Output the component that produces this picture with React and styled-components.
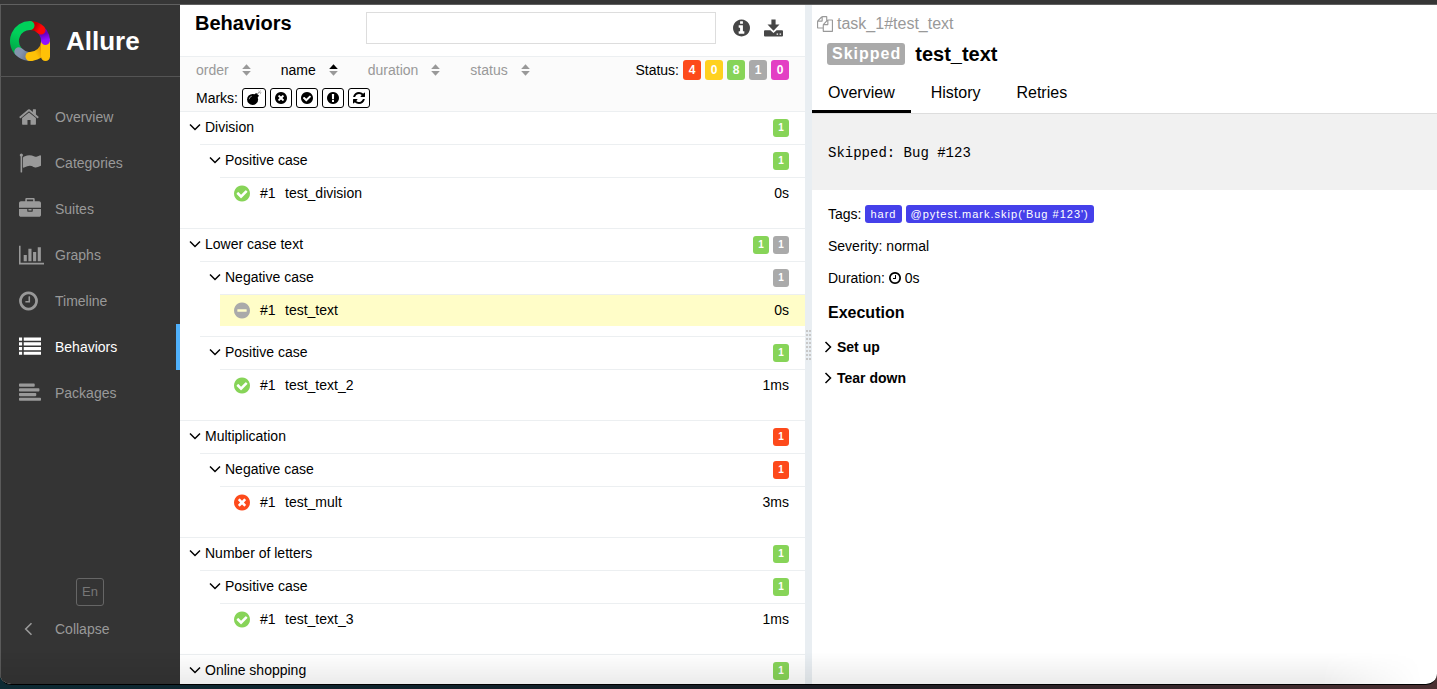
import React from "react";
import styled, { createGlobalStyle } from "styled-components";

const GlobalStyle = createGlobalStyle`
  *, *::before, *::after { box-sizing: border-box; }
  html, body, #root { height: 100%; }
  body {
    margin: 0;
    background: #000;
    color: #000;
    font-family: "Liberation Sans", Arial, sans-serif;
    font-size: 14px;
    line-height: 20px;
    overflow: hidden;
  }
  button { font: inherit; color: inherit; background: none; border: 0; padding: 0; cursor: pointer; text-align: left; }
  a { color: inherit; text-decoration: none; }
  h1, h2, h3, p, pre, ul { margin: 0; padding: 0; }
  ul { list-style: none; }
`;

const colors = {
  failed: "#fd4a1b",
  broken: "#ffd11f",
  passed: "#87d458",
  skipped: "#aaaaaa",
  unknown: "#e33fc4",
};

/* ---------- icons ---------- */

const DISC =
  "M1664 896q0 209-103 385.5t-279.5 279.5-385.5 103-385.5-103-279.5-279.5-103-385.5 103-385.5 279.5-279.5 385.5-103 385.5 103 279.5 279.5 103 385.5z";

const glyphs = {
  home: {
    x: 64, w: 1664,
    d: "M1472 992v480q0 26-19 45t-45 19h-384v-384h-256v384h-384q-26 0-45-19t-19-45v-480q0-1 .5-3t.5-3l575-474 575 474q1 2 1 6zm223-69l-62 74q-8 9-21 11h-3q-13 0-21-7l-692-577-692 577q-12 8-24 7-13-2-21-11l-62-74q-8-10-7-23.5t11-21.5l719-599q32-26 76-26t76 26l244 204v-195q0-14 9-23t23-9h192q14 0 23 9t9 23v408l219 182q10 8 11 21.5t-7 23.5z",
  },
  flag: {
    x: 0, w: 1792,
    d: "M320 256q0 72-64 110v1266q0 13-9.5 22.5t-22.5 9.5h-64q-13 0-22.5-9.5t-9.5-22.5v-1266q-64-38-64-110 0-53 37.5-90.5t90.5-37.5 90.5 37.5 37.5 90.5zm1472 64v763q0 25-12.5 38.5t-39.5 27.5q-215 116-369 116-61 0-123.5-22t-108.5-48-115.5-48-142.5-22q-192 0-464 146-17 9-33 9-26 0-45-19t-19-45v-742q0-32 31-55 21-14 79-43 236-120 421-120 107 0 200 29t219 88q38 19 88 19 54 0 117.5-21t110-47 88-47 54.5-21q26 0 45 19t19 45z",
  },
  briefcase: {
    x: 0, w: 1792,
    d: "M640 256h512v-128h-512v128zm1152 640v480q0 66-47 113t-113 47h-1472q-66 0-113-47t-47-113v-480h672v160q0 26 19 45t45 19h320q26 0 45-19t19-45v-160h672zm-768 0v128h-256v-128h256zm768-480v384h-1792v-384q0-66 47-113t113-47h352v-160q0-40 28-68t68-28h576q40 0 68 28t28 68v160h352q66 0 113 47t47 113z",
  },
  chart: {
    x: 0, w: 2048,
    d: "M640 896v512h-256v-512h256zm384-512v1024h-256v-1024h256zm1024 1152v128h-2048v-1536h128v1408h1920zm-640-896v768h-256v-768h256zm384-384v1152h-256v-1152h256z",
  },
  clock: {
    x: 128, w: 1536,
    d: "M1024 544v448q0 14-9 23t-23 9h-320q-14 0-23-9t-9-23v-64q0-14 9-23t23-9h224v-352q0-14 9-23t23-9h64q14 0 23 9t9 23zm416 352q0-148-73-273t-198-198-273-73-273 73-198 198-73 273 73 273 198 198 273 73 273-73 198-198 73-273zm224 0q0 209-103 385.5t-279.5 279.5-385.5 103-385.5-103-279.5-279.5-103-385.5 103-385.5 279.5-279.5 385.5-103 385.5 103 279.5 279.5 103 385.5z",
  },
  list: {
    x: 0, w: 1792,
    d: "M0 128h256v256H0zM384 128h1408v256H384zM0 512h256v256H0zM384 512h1408v256H384zM0 896h256v256H0zM384 896h1408v256H384zM0 1280h256v256H0zM384 1280h1408v256H384z",
  },
  align: {
    x: 0, w: 1792,
    d: "M64 128h1152q64 0 64 64v128q0 64-64 64H64q-64 0-64-64V192q0-64 64-64zM64 512h1536q64 0 64 64v128q0 64-64 64H64q-64 0-64-64V576q0-64 64-64zM64 896h1280q64 0 64 64v128q0 64-64 64H64q-64 0-64-64V960q0-64 64-64zM64 1280h1664q64 0 64 64v128q0 64-64 64H64q-64 0-64-64v-128q0-64 64-64z",
  },
  check: {
    x: 128, w: 1536,
    d: "M1412 734q0-28-18-46l-91-90q-19-19-45-19t-45 19l-408 407-226-226q-19-19-45-19t-45 19l-91 90q-18 18-18 46 0 27 18 45l362 362q19 19 45 19 27 0 46-19l543-543q18-18 18-45z" + DISC,
  },
  times: {
    x: 128, w: 1536,
    d: "M1277 1122q0-26-19-45l-181-181 181-181q19-19 19-45 0-27-19-46l-90-90q-19-18-46-18-26 0-45 19l-181 181-181-181q-19-19-45-19-27 0-46 18l-90 90q-18 19-18 46 0 26 19 45l181 181-181 181q-19 19-19 45 0 27 19 46l90 90q19 18 46 18 26 0 45-19l181-181 181 181q19 19 45 19 27 0 46-18l90-90q18-19 18-46z" + DISC,
  },
  minus: {
    x: 128, w: 1536,
    d: "M1344 960v-128q0-26-19-45t-45-19h-768q-26 0-45 19t-19 45v128q0 26 19 45t45 19h768q26 0 45-19t19-45z" + DISC,
  },
  info: {
    x: 128, w: 1536,
    d: "M1152 1376v-160q0-14-9-23t-23-9h-96v-512q0-14-9-23t-23-9h-320q-14 0-23 9t-9 23v160q0 14 9 23t23 9h96v320h-96q-14 0-23 9t-9 23v160q0 14 9 23t23 9h448q14 0 23-9t9-23zm-128-896v-160q0-14-9-23t-23-9h-192q-14 0-23 9t-9 23v160q0 14 9 23t23 9h192q14 0 23-9t9-23z" + DISC,
  },
  exclamation: {
    x: 128, w: 1536,
    d: "M1024 1375v-190q0-14-9-23.5t-22-9.5h-192q-13 0-23 10t-10 23v190q0 13 10 23t23 10h192q13 0 22-9.5t9-23.5zm-2-344l18-621q0-12-10-18-10-8-24-8h-220q-14 0-24 8-10 6-10 18l17 621q0 10 10 17.5t24 7.5h185q14 0 23.5-7.5t10.5-17.5z" + DISC,
  },
  refresh: {
    x: 128, w: 1536,
    d: "M1639 1056q0 5-1 7-64 268-268 434.5t-478 166.5q-146 0-282.5-55t-243.5-157l-129 129q-19 19-45 19t-45-19-19-45v-448q0-26 19-45t45-19h448q26 0 45 19t19 45-19 45l-137 137q71 66 161 102t187 36q134 0 250-65t186-179q11-17 53-117 8-23 30-23h192q13 0 22.5 9.5t9.5 22.5zm25-800v448q0 26-19 45t-45 19h-448q-26 0-45-19t-19-45 19-45l138-138q-148-137-349-137-134 0-250 65t-186 179q-11 17-53 117-8 23-30 23h-199q-13 0-22.5-9.5t-9.5-22.5v-7q65-268 270-434.5t480-166.5q146 0 284 55.5t245 156.5l130-129q19-19 45-19t45 19 19 45z",
  },
  copy: {
    x: 0, w: 1792,
    d: "M1696 384q40 0 68 28t28 68v1216q0 40-28 68t-68 28h-960q-40 0-68-28t-28-68v-288h-544q-40 0-68-28t-28-68v-672q0-40 20-88t48-76l408-408q28-28 76-48t88-20h416q40 0 68 28t28 68v328q68-40 128-40h416zm-544 213l-299 299h299v-299zm-640-384l-299 299h299v-299zm196 647l316-316v-416h-384v416q0 40-28 68t-68 28h-416v640h512v-256q0-40 20-88t48-76zm956 804v-1152h-384v416q0 40-28 68t-68 28h-416v640h896z",
  },
};

const IconSvg = styled.svg`
  display: block;
  flex: none;
  fill: ${(p) => p.$color || "currentColor"};
`;

function Icon({ name, size, color }) {
  const g = glyphs[name];
  return (
    <IconSvg
      $color={color}
      viewBox={`${g.x} 0 ${g.w} 1792`}
      height={size}
      width={Math.round((size * g.w) / 1792)}
      fillRule="evenodd"
      aria-hidden="true"
    >
      <path d={g.d} />
    </IconSvg>
  );
}

const LineSvg = styled.svg`
  display: block;
  flex: none;
  fill: none;
  stroke: currentColor;
`;

const ChevronDown = () => (
  <LineSvg width="12" height="12" viewBox="0 0 12 12" strokeWidth="1.5" aria-hidden="true">
    <path d="M1 3.5l5 5 5-5" />
  </LineSvg>
);
const ChevronRight = () => (
  <LineSvg width="8" height="12" viewBox="0 0 8 12" strokeWidth="1.5" aria-hidden="true">
    <path d="M1.5 1l5 5-5 5" />
  </LineSvg>
);
const ChevronLeft = () => (
  <LineSvg width="9" height="14" viewBox="0 0 9 14" strokeWidth="1.6" aria-hidden="true">
    <path d="M7.500 1.200L1.700 7l5.800 5.800" />
  </LineSvg>
);

const BombIcon = () => (
  <IconSvg width="16" height="16" viewBox="0 0 16 16" aria-hidden="true">
    <circle cx="6.600" cy="9.400" r="5.500" />
    <path d="M8.200 4.600l2-1.600 2.800 2.800-1.600 2z" />
    <path d="M11.200 4.600q.6-2.200 2.600-2.400" fill="none" stroke="#555" strokeWidth="0.7" />
    <path d="M12.400.8l1.200.8M14.400.4v1M15.400 2.400h-1.200M15 4l-1-.8" fill="none" stroke="#888" strokeWidth="0.6" />
    <path d="M3.200 9.200q.2-2.400 2.600-3" fill="none" stroke="#fff" strokeWidth="0.6" />
  </IconSvg>
);

const DownloadIcon = () => (
  <IconSvg width="19" height="18" viewBox="0 0 19 18" aria-hidden="true">
    <path d="M7.400 0.500h4.200v5h3.900L9.500 11.800 3.500 5.500h3.900z" />
    <path
      fillRule="evenodd"
      d="M1 11.300h5.400l3.100 2.600 3.100-2.600H18q1 0 1 1v4.200q0 1-1 1H1q-1 0-1-1v-4.200q0-1 1-1zM12.600 14.400v1.300h1.500v-1.300zM15.600 14.400v1.300h1.500v-1.300z"
    />
  </IconSvg>
);

const SortIcon = ({ asc }) => (
  <IconSvg width="9" height="12" viewBox="0 0 9 12" aria-hidden="true">
    <path d="M4.500.3L8.800 5H.2z" fill={asc ? "#000" : "#999"} />
    <path d="M4.500 11.700L8.800 7H.2z" fill="#999" />
  </IconSvg>
);

const Logo = () => (
  <svg width="40" height="40" viewBox="0 0 40 40" fill="none" strokeWidth="9" strokeLinecap="round" aria-hidden="true">
    <defs>
      <linearGradient id="green" x1="20" y1="4" x2="8" y2="32" gradientUnits="userSpaceOnUse">
        <stop offset="0.4" stopColor="#00d15a" />
        <stop offset="1" stopColor="#00a847" />
      </linearGradient>
      <linearGradient id="red" x1="22" y1="5" x2="34" y2="12" gradientUnits="userSpaceOnUse">
        <stop offset="0.2" stopColor="#c00000" />
        <stop offset="0.6" stopColor="#ff0707" />
      </linearGradient>
      <linearGradient id="violet" x1="33" y1="11" x2="36" y2="21" gradientUnits="userSpaceOnUse">
        <stop offset="0.2" stopColor="#6a00c0" />
        <stop offset="0.8" stopColor="#9010ff" />
      </linearGradient>
      <linearGradient id="slate" x1="8" y1="30" x2="18" y2="36" gradientUnits="userSpaceOnUse">
        <stop offset="0.3" stopColor="#8594ad" />
        <stop offset="1" stopColor="#6b7890" />
      </linearGradient>
      <linearGradient id="amber" x1="20" y1="36" x2="34" y2="28" gradientUnits="userSpaceOnUse">
        <stop offset="0.4" stopColor="#ffc107" />
        <stop offset="1" stopColor="#d98c00" />
      </linearGradient>
    </defs>
    <path d="M20 35.500A15.500 15.500 0 0 0 35.500 21" stroke="url(#amber)" />
    <path d="M35.500 20v15.500" stroke="#ffc107" />
    <path d="M32.800 11.300A15.500 15.500 0 0 1 35.500 19.500" stroke="url(#violet)" />
    <path d="M20.500 4.500A15.500 15.500 0 0 1 31 9" stroke="url(#red)" />
    <path d="M20 4.500A15.500 15.500 0 0 0 8.500 30.400" stroke="url(#green)" />
    <path d="M8.800 30.700A15.500 15.500 0 0 0 18 35.400" stroke="url(#slate)" />
    <path d="M20 35.500h1" stroke="#ffc107" />
  </svg>
);

/* ---------- window ---------- */

const Desktop = styled.div`
  height: 100%;
  padding-bottom: 4px;
  background: linear-gradient(90deg, #0d2a33 0, #10222b 30%, #1c1c22 60%, #4a2f31 100%);
`;

const Window = styled.div`
  position: relative;
  height: 100%;
  display: flex;
  flex-direction: column;
  overflow: hidden;
  border-bottom: 1px solid #000;
  border-radius: 0 0 11px 11px;
  background: #fff;
`;

const TitleEdge = styled.div`
  flex: none;
  height: 5px;
  background: #363636;
  border-bottom: 1px solid #606060;
`;

const Columns = styled.div`
  flex: 1;
  min-height: 0;
  display: flex;
`;

const BottomShade = styled.div`
  position: absolute;
  inset: auto 0 0 0;
  height: 32px;
  pointer-events: none;
  background: linear-gradient(to bottom, rgba(0, 0, 0, 0), rgba(0, 0, 0, 0.08));
  mask-image: linear-gradient(to right, #000 92%, transparent 99%);
`;

/* ---------- sidebar ---------- */

const Sidebar = styled.aside`
  flex: none;
  width: 180px;
  display: flex;
  flex-direction: column;
  background: #343434;
  box-shadow: inset 1px 0 #5a5a5a;
  color: #999;
`;

const Brand = styled.a`
  display: flex;
  align-items: center;
  gap: 16px;
  height: 72px;
  padding-left: 10px;
  border-bottom: 1px solid #545454;
  color: #fff;
  font-size: 26px;
  font-weight: bold;
`;

const Nav = styled.nav`
  flex: 1;
  padding-top: 17px;
`;

const NavItem = styled.a`
  display: flex;
  align-items: center;
  height: 46px;
  padding-left: 19px;
  border-right: 4px solid ${(p) => (p.$active ? "#4fb0fb" : "transparent")};
  color: ${(p) => (p.$active ? "#fff" : "inherit")};
`;

const NavIcon = styled.span`
  width: 36px;
`;

const SidebarFoot = styled.div`
  display: flex;
  flex-direction: column;
  padding-bottom: 32px;
`;

const LangButton = styled.button`
  align-self: center;
  width: 28px;
  height: 28px;
  border: 1px solid #666;
  border-radius: 3px;
  color: #777;
  font-size: 13px;
  text-align: center;
`;

const CollapseButton = styled.button`
  display: flex;
  align-items: center;
  height: 46px;
  padding-left: 24px;
`;

const CollapseIcon = styled.span`
  width: 31px;
`;

/* ---------- tree pane ---------- */

const TreePane = styled.section`
  flex: 1;
  min-width: 0;
  overflow: hidden;
`;

const TreeHeader = styled.header`
  display: flex;
  align-items: flex-start;
  height: 52px;
  padding: 7px 22px 0 15px;
  border-bottom: 1px solid #eceff1;
`;

const PaneTitle = styled.h1`
  flex: 1;
  font-size: 20px;
  line-height: 22px;
`;

const Search = styled.input`
  width: 350px;
  height: 32px;
  margin-right: 17px;
  padding: 0 8px;
  border: 1px solid #ddd;
  background: #fff;
  font: inherit;
`;

const HeaderTools = styled.div`
  display: flex;
  align-items: center;
  gap: 14px;
  height: 32px;
  color: #464646;
`;

const Filters = styled.div`
  height: 55px;
  padding: 3px 16px 0;
  background: #fbfbfb;
  border-bottom: 1px solid #eceff1;
`;

const FilterRow = styled.div`
  display: flex;
  align-items: center;
  gap: ${(p) => p.$gap}px;
  margin-bottom: 8px;
`;

const Sorter = styled.button`
  display: flex;
  align-items: center;
  gap: 13px;
  color: ${(p) => (p.$active ? "#000" : "#999")};
`;

const StatusFilter = styled.div`
  display: flex;
  align-items: center;
  gap: 4px;
  margin-left: auto;
`;

const StatusButton = styled.button`
  min-width: 18px;
  height: 20px;
  border-radius: 3px;
  background: ${(p) => colors[p.$status]};
  color: #fff;
  font-size: 12px;
  font-weight: bold;
  text-align: center;
`;

const MarkButton = styled.button`
  display: flex;
  align-items: center;
  justify-content: center;
  height: 20px;
  padding: 0 ${(p) => p.$pad}px;
  border: 1px solid #000;
  border-radius: 3px;
  background: #fff;
`;

const Group = styled.li`
  padding-bottom: 9px;
  & + & { border-top: 1px solid #eceff1; }
`;

const GroupHead = styled.button`
  display: flex;
  align-items: center;
  gap: 4px;
  width: 100%;
  height: 32px;
  padding: 0 16px 2px 9px;
`;

const GroupName = styled.span`
  flex: 1;
`;

const SubGroup = styled.li`
  margin-left: 20px;
  padding-bottom: 10px;
  border-top: 1px solid #eceff1;
`;

const Leaf = styled.a`
  display: flex;
  align-items: center;
  height: 31px;
  padding: 0 16px 1px 14px;
  background: ${(p) => (p.$selected ? "#fffdc8" : "transparent")};
`;

const LeafItem = styled.li`
  margin-left: 20px;
  border-top: 1px solid #eceff1;
`;

const LeafOrder = styled.span`
  width: 25px;
  margin-left: 10px;
`;

const LeafName = styled.span`
  flex: 1;
`;

const Count = styled.span`
  min-width: 16px;
  height: 18px;
  margin-top: 2px;
  border-radius: 3px;
  background: ${(p) => colors[p.$status]};
  color: #fff;
  font-size: 10px;
  font-weight: bold;
  line-height: 18px;
  text-align: center;
`;

/* ---------- divider ---------- */

const Divider = styled.div`
  flex: none;
  display: flex;
  align-items: center;
  justify-content: center;
  width: 7px;
  background: #e9eef2;
  cursor: col-resize;
`;

const Grip = () => (
  <svg width="5" height="30" viewBox="0 0 5 30" fill="#c8c8c8" aria-hidden="true">
    {[0, 4, 8, 12, 16, 20, 24, 28].map((y) => (
      <path key={y} d={`M0 ${y}h2v2H0zM3 ${y}h2v2H3z`} />
    ))}
  </svg>
);

/* ---------- detail pane ---------- */

const DetailPane = styled.section`
  flex: 1;
  min-width: 0;
  overflow: hidden;
`;

const FullName = styled.div`
  display: flex;
  align-items: center;
  gap: 4px;
  padding: 8px 5px 0;
  color: #999;
  font-size: 16px;
  line-height: 22px;
`;

const TestTitle = styled.h2`
  display: flex;
  align-items: center;
  gap: 10px;
  padding: 8px 15px 0;
  font-size: 20px;
  line-height: 22px;
`;

const StatusLabel = styled.span`
  height: 22px;
  padding: 0 4px 0 5px;
  border-radius: 3px;
  background: ${(p) => colors[p.$status]};
  color: #fff;
  font-size: 16px;
  line-height: 22px;
  letter-spacing: 1px;
`;

const Tabs = styled.nav`
  display: flex;
  gap: 4px;
  margin-top: 7px;
  border-bottom: 1px solid #ddd;
`;

const Tab = styled.a`
  height: 41px;
  padding: 0 16px;
  border-bottom: 3px solid ${(p) => (p.$active ? "#000" : "transparent")};
  font-size: 16px;
  line-height: 42px;
`;

const Message = styled.pre`
  padding: 29px 16px 27px;
  background: #f1f1f1;
  font-family: "Liberation Mono", "Courier New", monospace;
  font-size: 14px;
  line-height: 20px;
`;

const Facts = styled.div`
  display: flex;
  flex-direction: column;
  gap: 12px;
  padding: 14px 16px 0;
`;

const Fact = styled.p`
  display: flex;
  align-items: center;
  gap: 4px;
`;

const Tag = styled.span`
  height: 18px;
  padding: 0 5px;
  border-radius: 3px;
  background: #4540ea;
  color: #fff;
  font-size: 11px;
  line-height: 18px;
  letter-spacing: 1px;
`;

const SectionTitle = styled.h3`
  padding: 15px 16px 8px;
  font-size: 16px;
  line-height: 20px;
`;

const Step = styled.button`
  display: flex;
  align-items: center;
  gap: 5px;
  width: 100%;
  height: 31px;
  padding-left: 12px;
  font-weight: bold;
`;

/* ---------- data ---------- */

const navItems = [
  ["home", "Overview"],
  ["flag", "Categories"],
  ["briefcase", "Suites"],
  ["chart", "Graphs"],
  ["clock", "Timeline"],
  ["list", "Behaviors"],
  ["align", "Packages"],
];

const sorters = ["order", "name", "duration", "status"];

const statusCounts = [
  ["failed", 4],
  ["broken", 0],
  ["passed", 8],
  ["skipped", 1],
  ["unknown", 0],
];

const marks = [
  ["times", "Newly failed"],
  ["check", "Newly passed"],
  ["exclamation", "Newly broken"],
  ["refresh", "Retries"],
];

const leafIcons = { passed: "check", failed: "times", skipped: "minus" };

const tree = [
  { name: "Division", counts: ["passed"], cases: [
    { name: "Positive case", status: "passed", test: "test_division", time: "0s" },
  ] },
  { name: "Lower case text", counts: ["passed", "skipped"], cases: [
    { name: "Negative case", status: "skipped", test: "test_text", time: "0s", selected: true },
    { name: "Positive case", status: "passed", test: "test_text_2", time: "1ms" },
  ] },
  { name: "Multiplication", counts: ["failed"], cases: [
    { name: "Negative case", status: "failed", test: "test_mult", time: "3ms" },
  ] },
  { name: "Number of letters", counts: ["passed"], cases: [
    { name: "Positive case", status: "passed", test: "test_text_3", time: "1ms" },
  ] },
  { name: "Online shopping", counts: ["passed"], cases: [] },
];

export default function App() {
  return (
    <>
      <GlobalStyle />
      <Desktop>
        <Window>
          <TitleEdge />
          <Columns>
            <Sidebar>
              <Brand href="#">
                <Logo />
                <span>Allure</span>
              </Brand>
              <Nav>
                {navItems.map(([icon, label]) => (
                  <NavItem key={label} href="#" $active={label === "Behaviors"}>
                    <NavIcon><Icon name={icon} size={22} /></NavIcon>
                    <span>{label}</span>
                  </NavItem>
                ))}
              </Nav>
              <SidebarFoot>
                <LangButton type="button">En</LangButton>
                <CollapseButton type="button">
                  <CollapseIcon><ChevronLeft /></CollapseIcon>
                  <span>Collapse</span>
                </CollapseButton>
              </SidebarFoot>
            </Sidebar>

            <TreePane>
              <TreeHeader>
                <PaneTitle>Behaviors</PaneTitle>
                <Search type="text" aria-label="Search" />
                <HeaderTools>
                  <button type="button" aria-label="Show info"><Icon name="info" size={20} /></button>
                  <button type="button" aria-label="Download CSV"><DownloadIcon /></button>
                </HeaderTools>
              </TreeHeader>
              <Filters>
                <FilterRow $gap={30}>
                  {sorters.map((s) => (
                    <Sorter key={s} type="button" $active={s === "name"}>
                      <span>{s}</span>
                      <SortIcon asc={s === "name"} />
                    </Sorter>
                  ))}
                  <StatusFilter>
                    <span>Status:</span>
                    {statusCounts.map(([status, n]) => (
                      <StatusButton key={status} type="button" $status={status}>{n}</StatusButton>
                    ))}
                  </StatusFilter>
                </FilterRow>
                <FilterRow $gap={4}>
                  <span>Marks:</span>
                  <MarkButton type="button" aria-label="Flaky" $pad={3}><BombIcon /></MarkButton>
                  {marks.map(([icon, label]) => (
                    <MarkButton key={icon} type="button" aria-label={label} $pad={4}>
                      <Icon name={icon} size={14} />
                    </MarkButton>
                  ))}
                </FilterRow>
              </Filters>
              <ul>
                {tree.map((g) => (
                  <Group key={g.name}>
                    <GroupHead type="button">
                      <ChevronDown />
                      <GroupName>{g.name}</GroupName>
                      {g.counts.map((c) => <Count key={c} $status={c}>1</Count>)}
                    </GroupHead>
                    <ul>
                      {g.cases.map((c) => (
                        <SubGroup key={c.name}>
                          <GroupHead type="button">
                            <ChevronDown />
                            <GroupName>{c.name}</GroupName>
                            <Count $status={c.status}>1</Count>
                          </GroupHead>
                          <ul>
                            <LeafItem>
                              <Leaf href="#" $selected={c.selected}>
                                <Icon name={leafIcons[c.status]} size={19} color={colors[c.status]} />
                                <LeafOrder>#1</LeafOrder>
                                <LeafName>{c.test}</LeafName>
                                <span>{c.time}</span>
                              </Leaf>
                            </LeafItem>
                          </ul>
                        </SubGroup>
                      ))}
                    </ul>
                  </Group>
                ))}
              </ul>
            </TreePane>

            <Divider><Grip /></Divider>

            <DetailPane>
              <FullName>
                <Icon name="copy" size={16} />
                <span>task_1#test_text</span>
              </FullName>
              <TestTitle>
                <StatusLabel $status="skipped">Skipped</StatusLabel>
                <span>test_text</span>
              </TestTitle>
              <Tabs>
                <Tab href="#" $active>Overview</Tab>
                <Tab href="#">History</Tab>
                <Tab href="#">Retries</Tab>
              </Tabs>
              <Message>Skipped: Bug #123</Message>
              <Facts>
                <Fact>
                  <span>Tags:</span>
                  <Tag>hard</Tag>
                  <Tag>@pytest.mark.skip('Bug #123')</Tag>
                </Fact>
                <Fact>Severity: normal</Fact>
                <Fact>
                  <span>Duration:</span>
                  <Icon name="clock" size={14} />
                  <span>0s</span>
                </Fact>
              </Facts>
              <SectionTitle>Execution</SectionTitle>
              <Step type="button"><ChevronRight /><span>Set up</span></Step>
              <Step type="button"><ChevronRight /><span>Tear down</span></Step>
            </DetailPane>
          </Columns>
          <BottomShade />
        </Window>
      </Desktop>
    </>
  );
}
